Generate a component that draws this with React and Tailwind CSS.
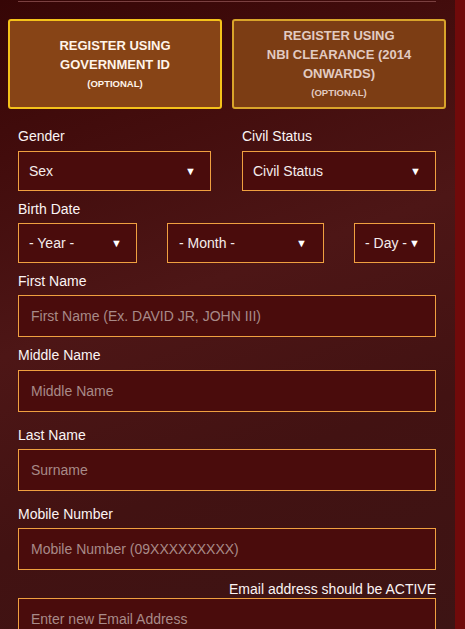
import React from "react";

const Arrow = () => (
  <span className="text-[11px] leading-none text-white">▼</span>
);

function Select({ label, className }) {
  return (
    <div
      className={`h-[40px] border border-[#f0a040] bg-[#4a0c0c] flex items-center justify-between pl-[10px] pr-[14px] text-[14px] text-[#f5ecec] ${className}`}
    >
      <span>{label}</span>
      <Arrow />
    </div>
  );
}

function Input({ placeholder }) {
  return (
    <div className="h-[42px] border border-[#f0a040] bg-[#4a0c0c] flex items-center pl-[12px] text-[14px] text-[#a88a88]">
      {placeholder}
    </div>
  );
}

function Label({ children, className = "" }) {
  return (
    <div className={`text-[14px] leading-[16px] text-[#fbf4f4] ${className}`}>
      {children}
    </div>
  );
}

export default function App() {
  return (
    <div
      className="w-[465px] h-[629px] overflow-hidden flex bg-[#700a0a]"
      style={{ fontFamily: '"Liberation Sans", Arial, sans-serif' }}
    >
      <div className="w-[455px] h-full bg-[linear-gradient(160deg,#360606_0%,#420c0c_20%,#4d1616_45%,#421212_70%,#3d1414_100%)]">
        <div className="mx-[18px] mt-[1px] h-px w-[418px] bg-[#7a4040]" />
        <div className="flex gap-[10px] pl-[8px] pt-[17px]">
          <div className="w-[214px] h-[90px] rounded-[3px] border-2 border-[#f5c21a] bg-[#874416] flex flex-col items-center justify-center text-center text-[#fff4ea]">
            <div className="font-bold text-[13px] leading-[19px]">REGISTER USING</div>
            <div className="font-bold text-[13px] leading-[19px]">GOVERNMENT ID</div>
            <div className="font-bold text-[9.5px] leading-[19px]">(OPTIONAL)</div>
          </div>
          <div className="w-[214px] h-[90px] rounded-[3px] border-2 border-[#d9a42a] bg-[#7c3d14] flex flex-col items-center justify-center text-center text-[#e2cbc2]">
            <div className="font-bold text-[13px] leading-[19px]">REGISTER USING</div>
            <div className="font-bold text-[13px] leading-[19px]">NBI CLEARANCE (2014</div>
            <div className="font-bold text-[13px] leading-[19px]">ONWARDS)</div>
            <div className="font-bold text-[9.5px] leading-[19px]">(OPTIONAL)</div>
          </div>
        </div>

        <div className="ml-[18px] w-[418px]">
          <div className="flex justify-between mt-[19px]">
            <div className="w-[193px]">
              <Label className="mb-[7px]">Gender</Label>
              <Select label="Sex" />
            </div>
            <div className="w-[194px]">
              <Label className="mb-[7px]">Civil Status</Label>
              <Select label="Civil Status" />
            </div>
          </div>

          <Label className="mt-[10px] mb-[6px]">Birth Date</Label>
          <div className="flex justify-between w-[417px]">
            <Select label="- Year -" className="w-[119px] pr-[13px]" />
            <Select label="- Month -" className="w-[157px] pl-[11px] pr-[16px]" />
            <Select label="- Day -" className="w-[81px] pl-[10px] pr-[12px]" />
          </div>

          <Label className="mt-[10px] mb-[6px]">First Name</Label>
          <Input placeholder="First Name (Ex. DAVID JR, JOHN III)" />

          <Label className="mt-[10px] mb-[7px]">Middle Name</Label>
          <Input placeholder="Middle Name" />

          <Label className="mt-[15px] mb-[6px]">Last Name</Label>
          <Input placeholder="Surname" />

          <Label className="mt-[15px] mb-[6px]">Mobile Number</Label>
          <Input placeholder="Mobile Number (09XXXXXXXXX)" />

          <Label className="mt-[11px] mb-[1px] text-right">
            Email address should be ACTIVE
          </Label>
          <Input placeholder="Enter new Email Address" />
        </div>
      </div>
    </div>
  );
}
